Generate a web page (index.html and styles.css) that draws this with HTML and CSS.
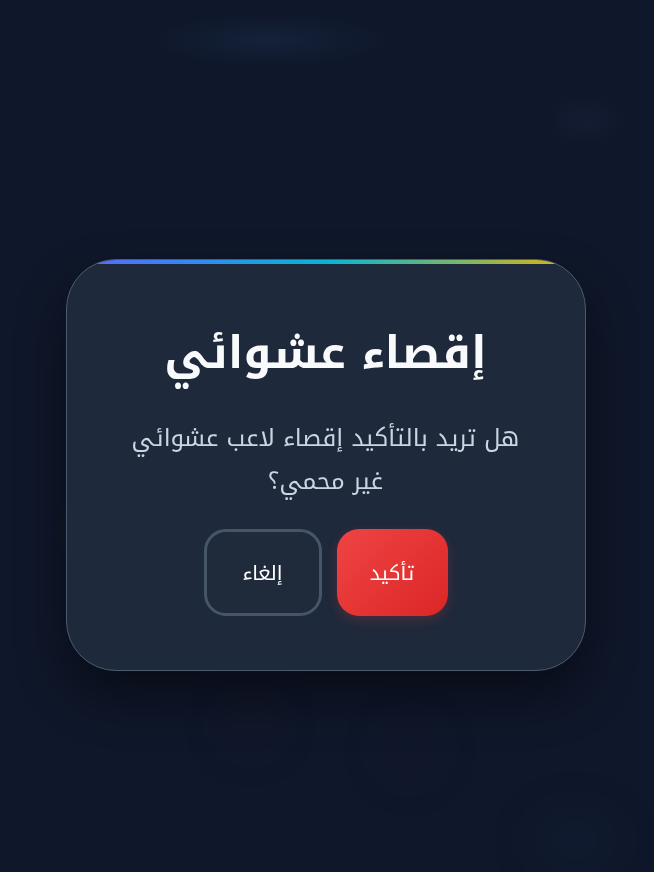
FILE: index.html
```html
<!DOCTYPE html>
<html lang="ar" dir="rtl">
<head>
<meta charset="utf-8">
<title>إقصاء عشوائي</title>
<link rel="stylesheet" href="styles.css">
</head>
<body>
<div class="backdrop">
  <div class="blob blob-a"></div>
  <div class="blob blob-b"></div>
  <div class="blob blob-c"></div>
</div>
<div class="overlay">
  <div class="modal">
    <div class="accent"></div>
    <h2 class="title">إقصاء عشوائي</h2>
    <p class="message">هل تريد بالتأكيد إقصاء لاعب عشوائي غير محمي؟</p>
    <div class="actions">
      <button class="btn btn-confirm">تأكيد</button>
      <button class="btn btn-cancel">إلغاء</button>
    </div>
  </div>
</div>
</body>
</html>
```
FILE: styles.css
```css
* { box-sizing: border-box; }
html, body { margin: 0; height: 100%; }
body {
  background: #0f172a;
  background-image:
    radial-gradient(ellipse 180px 40px at 270px 40px, rgba(30,58,90,0.3), transparent 70%),
    radial-gradient(ellipse 60px 40px at 585px 120px, rgba(30,41,70,0.3), transparent 70%),
    radial-gradient(ellipse 50px 60px at 90px 530px, rgba(80,30,40,0.18), transparent 70%);
  font-family: "Noto Kufi Arabic", "Noto Sans Arabic", "DejaVu Sans", sans-serif;
  overflow: hidden;
}
.backdrop { position: fixed; inset: 0; pointer-events: none; }
.blob { position: absolute; border-radius: 50%; filter: blur(20px); }
.blob-a { left: 220px; top: 700px; width: 60px; height: 50px; background: rgba(50,30,50,0.14); }
.blob-b { left: 380px; top: 720px; width: 60px; height: 60px; background: rgba(45,30,55,0.12); }
.blob-c { left: 530px; top: 810px; width: 90px; height: 60px; background: rgba(30,50,80,0.14); }
.overlay {
  position: fixed; inset: 0;
  display: flex; justify-content: center; align-items: flex-start;
  padding-top: 259px;
  padding-right: 3px;
}
.modal {
  position: relative;
  width: 520px;
  background: #1e293b;
  border: 1px solid #4b5b70;
  border-radius: 50px;
  padding: 60px 40px 54px;
  text-align: center;
  overflow: hidden;
  box-shadow: 0 25px 50px rgba(0,0,0,0.45);
}
.accent {
  position: absolute; top: 0; left: 0; right: 0; height: 4px;
  background: linear-gradient(90deg, #6366f1, #3b82f6 20%, #06b6d4 50%, #eab308);
}
.title {
  margin: 0;
  color: #f8fafc;
  font-size: 45px;
  font-weight: 700;
  line-height: 66px;
}
.message {
  margin: 31px 0 26px;
  color: #cbd5e1;
  font-size: 24px;
  line-height: 43px;
  padding: 0 14px;
}
.actions { display: flex; justify-content: center; gap: 15px; }
.btn {
  font-family: inherit;
  font-size: 20px;
  color: #fff;
  height: 87px;
  border-radius: 22px;
  cursor: pointer;
}
.btn-confirm {
  width: 111px;
  border: none;
  background: linear-gradient(135deg, #ef4444, #dc2626);
  box-shadow: 0 4px 12px rgba(239,68,68,0.2);
}
.btn-cancel {
  width: 118px;
  background: #1f2a3a;
  border: 3px solid #475569;
}
```
